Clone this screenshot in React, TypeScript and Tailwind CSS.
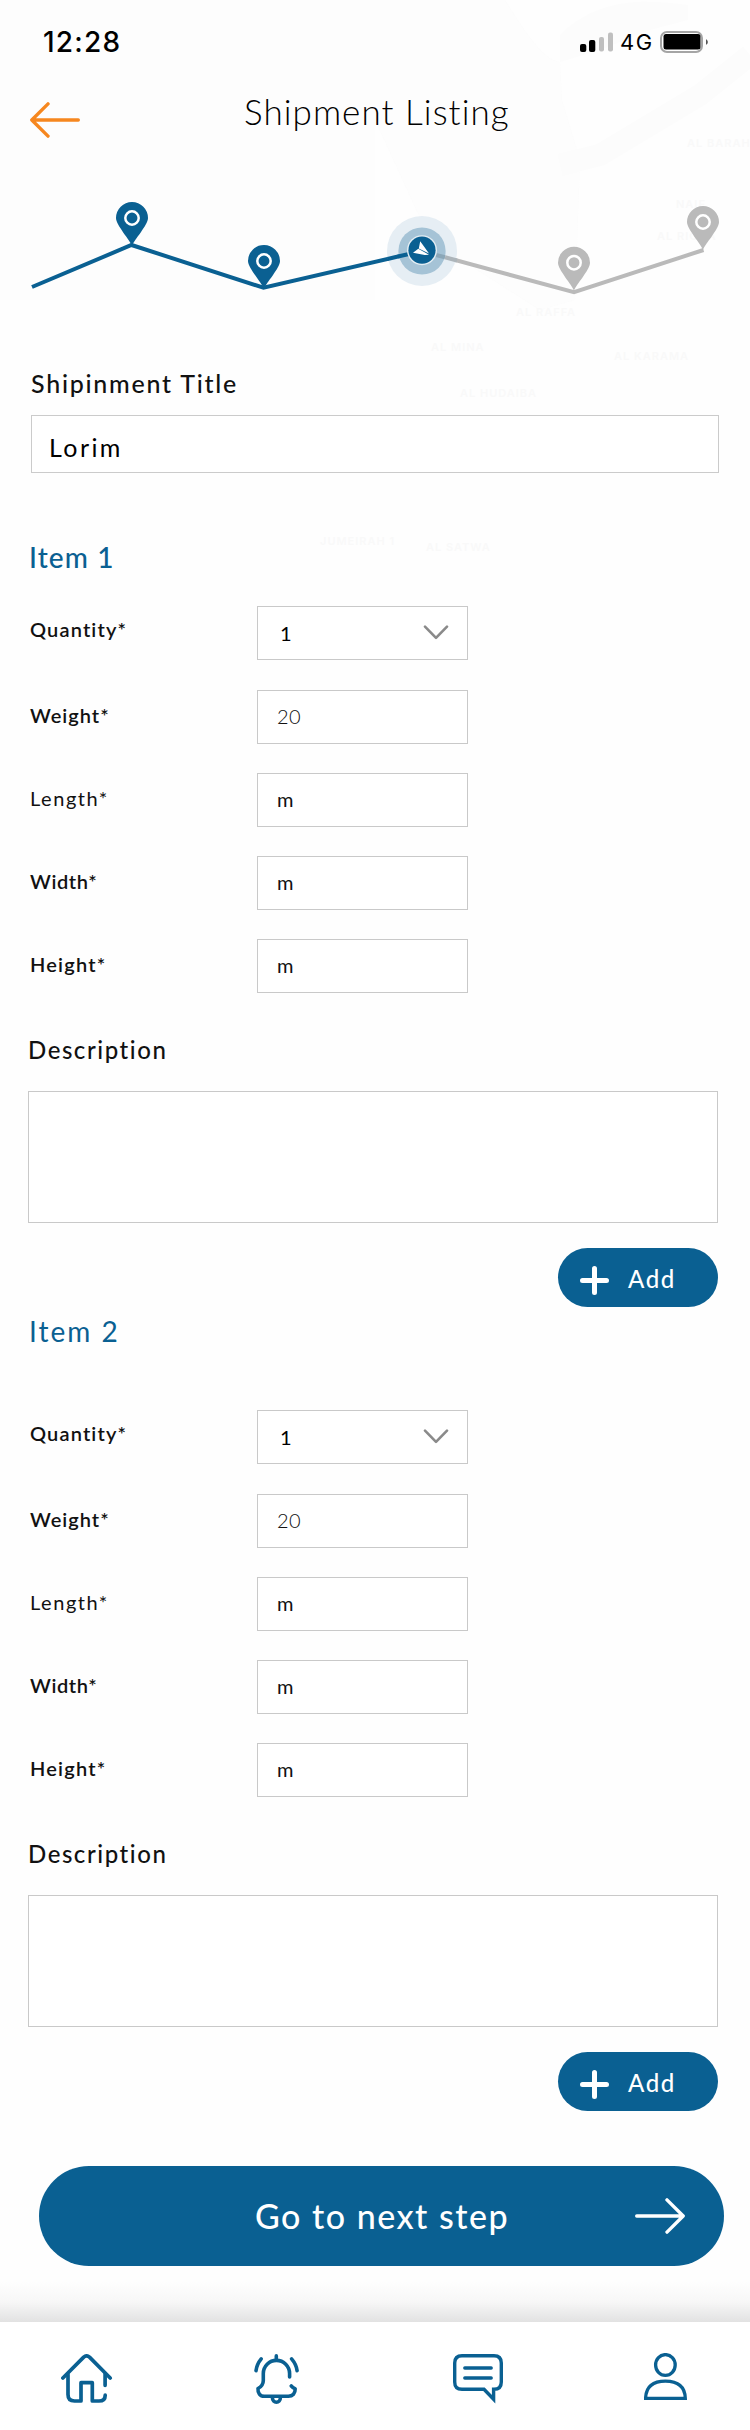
import type { ReactNode } from "react";

const BLUE = "#0a6092";
const GRAY = "#bababa";

function MapBackdrop() {
  return (
    <svg className="absolute inset-0" width="750" height="850" viewBox="0 0 750 850" aria-hidden="true">
      <path d="M505 0C530 40 545 60 560 62L562 100L580 160L575 300L540 310L430 240L375 120V300H0V0Z" fill="#fcfcfc" opacity="0.5" />
      <path d="M560 35C600 -5 650 0 688 5V20L650 30L600 50L560 62Z" fill="#fcfcfc" />
      <path d="M750 55L700 95L600 155L560 165" stroke="#fcfcfc" strokeWidth="22" fill="none" />
      <g fill="#f9f9f9" fontFamily="Inter, sans-serif" fontWeight="600" fontSize="11" letterSpacing="1">
        <text x="687" y="147">AL BARAH</text>
        <text x="676" y="208">NAIF</text>
        <text x="657" y="240">AL RIGGA</text>
        <text x="516" y="316">AL RAFFA</text>
        <text x="431" y="351">AL MINA</text>
        <text x="614" y="360">AL KARAMA</text>
        <text x="460" y="397">AL HUDAIBA</text>
        <text x="320" y="545">JUMEIRAH 1</text>
        <text x="426" y="551">AL SATWA</text>
      </g>
    </svg>
  );
}

function StatusBar() {
  return (
    <div className="flex h-[84px] items-center pr-[41px] pl-[43px] text-black">
      <span className="font-[Inter,sans-serif] text-[28px] font-medium tracking-[1.2px]">12:28</span>
      <div className="ml-auto flex items-center">
        <svg width="34" height="20" viewBox="0 0 34 20">
          <rect x="0" y="12" width="6.3" height="8" rx="2" fill="#000" />
          <rect x="9" y="8" width="6.3" height="12" rx="2" fill="#000" />
          <rect x="19" y="5" width="5" height="14.5" rx="2" fill="#bfbfbf" />
          <rect x="28" y="0.5" width="5" height="19" rx="2" fill="#bfbfbf" />
        </svg>
        <span className="ml-[6px] w-[40px] font-[Inter,sans-serif] text-[22px] tracking-[1.5px]">4G</span>
        <svg width="49" height="22" viewBox="0 0 49 22">
          <rect x="1" y="1" width="41" height="20" rx="6" fill="#fff" stroke="#a5a5a5" strokeWidth="2" />
          <rect x="3.5" y="3" width="37" height="15.5" rx="2.5" fill="#000" />
          <path d="M46 8.2C48.4 9.3 48.4 12.7 46 13.8Z" fill="#555" />
        </svg>
      </div>
    </div>
  );
}

function Header() {
  return (
    <header className="flex h-[53px] items-center pl-[30px]">
      <svg className="mt-[18px]" width="50" height="36" viewBox="0 0 50 36" fill="none" stroke="#f6871f" strokeWidth="3.4" strokeLinecap="round" strokeLinejoin="round">
        <path d="M48.3 18H2M18 1.9L1.8 18L18 34.1" />
      </svg>
      <h1 className="mt-[1px] ml-[164px] text-[35px] font-light tracking-[1.05px] whitespace-nowrap text-black">Shipment Listing</h1>
    </header>
  );
}

function Pin({ x, y, color }: { x: number; y: number; color: string }) {
  return (
    <g transform={`translate(${x} ${y})`}>
      <path d="M0 28C-2 22 -16 7 -16 0A16 16 0 0 1 16 0C16 7 2 22 0 28Z" fill={color} />
      <circle r="6.7" fill="none" stroke="#fff" strokeWidth="2.5" />
    </g>
  );
}

function Stepper() {
  return (
    <svg className="mt-[43px] block" width="750" height="130" viewBox="0 180 750 130">
      <path d="M422 251L574 292.2L703.5 250" fill="none" stroke={GRAY} strokeWidth="4" />
      <path d="M32 287L131.5 245L263.5 287.7L422 251" fill="none" stroke={BLUE} strokeWidth="4" />
      <circle cx="422" cy="251" r="35" fill="#e6eef4" />
      <circle cx="422" cy="251" r="23.6" fill="#a5c3d6" />
      <path d="M387.5 259L399 256.3" stroke={BLUE} strokeWidth="4" />
      <path d="M398 256.5L409 254" stroke={BLUE} strokeWidth="4" />
      <path d="M436 255L445 257.3" stroke="#8ba7b8" strokeWidth="4" />
      <path d="M445 257.3L457 260.5" stroke="#adb5ba" strokeWidth="4" />
      <circle cx="422" cy="250.2" r="15" fill="#e3edf3" />
      <circle cx="422" cy="250.2" r="13.6" fill={BLUE} />
      <path d="M420.2 241.3L418.8 248.4L429 253.4L424 246.4ZM418.3 248.8L413 252.8L424.8 255.1L429 254.7Z" fill="#fff" />
      <Pin x={132} y={218} color={BLUE} />
      <Pin x={264} y={261} color={BLUE} />
      <Pin x={574} y={262.7} color={GRAY} />
      <Pin x={703} y={222} color={GRAY} />
    </svg>
  );
}

function Row({ label, labelClass, children }: { label: string; labelClass: string; children: ReactNode }) {
  return (
    <div className="flex h-[54px] items-center pl-[30px]">
      <div className={`w-[227px] text-[20px] leading-6 whitespace-nowrap text-[#111] ${labelClass}`}>{label}</div>
      {children}
    </div>
  );
}

function ValueBox({ value, className }: { value: string; className: string }) {
  return (
    <div className="flex h-[54px] w-[211px] items-center border border-[#c9c9c9] bg-white pb-[2px] pl-[19px]">
      <span className={`text-[20px] leading-6 text-[#111] ${className}`}>{value}</span>
    </div>
  );
}

function SelectBox({ value }: { value: string }) {
  return (
    <div className="flex h-[54px] w-[211px] items-center justify-between border border-[#c9c9c9] bg-white pr-[18px] pb-[1px] pl-[22px]">
      <span className="text-[20px] leading-6 text-black">{value}</span>
      <svg width="26" height="15" viewBox="0 0 26 15" fill="none" stroke="#8a8a8a" strokeWidth="2.6" strokeLinecap="round" strokeLinejoin="round">
        <path d="M2 1.6L13 12.9L24 1.6" />
      </svg>
    </div>
  );
}

function ItemFields() {
  return (
    <div>
      <Row label="Quantity*" labelClass="pb-[9px] font-semibold tracking-[1.15px]">
        <SelectBox value="1" />
      </Row>
      <div className="mt-[30px] flex flex-col gap-[29px]">
        <Row label="Weight*" labelClass="pb-[4px] font-semibold tracking-[1px]">
          <ValueBox value="20" className="font-light tracking-[0.4px]" />
        </Row>
        <Row label="Length*" labelClass="pb-[4px] tracking-[1.55px]">
          <ValueBox value="m" className="" />
        </Row>
        <Row label="Width*" labelClass="pb-[4px] font-semibold tracking-[0.6px]">
          <ValueBox value="m" className="" />
        </Row>
        <Row label="Height*" labelClass="pb-[4px] font-semibold tracking-[1.2px]">
          <ValueBox value="m" className="" />
        </Row>
      </div>
      <div className="pl-[28px]">
        <div className="mt-[43px] text-[24px] leading-7 font-medium tracking-[1.55px] text-[#111]">Description</div>
        <div className="mt-[27px] h-[132px] w-[690px] border border-[#c9c9c9] bg-white" />
      </div>
      <div className="mt-[25px] flex justify-end pr-8">
        <button className="flex h-[59px] w-[160px] items-center rounded-full bg-[#0a6092] pl-[22px] text-white">
          <svg className="mt-[5px]" width="29" height="29" viewBox="0 0 29 29" stroke="#fff" strokeWidth="5" strokeLinecap="round">
            <path d="M2.5 14.5H26.5M14.5 2.5V26.5" />
          </svg>
          <span className="mt-[3px] ml-[19px] text-[24px] leading-7 font-medium tracking-[1.6px]">Add</span>
        </button>
      </div>
    </div>
  );
}

function BottomNav() {
  return (
    <nav className="flex h-[108px] items-start bg-white pt-8 pl-[61px]">
      <svg width="52" height="52" viewBox="0 0 52 52" fill="none" stroke={BLUE} strokeWidth="3.7" strokeLinecap="round" strokeLinejoin="round">
        <path d="M1.9 24L22.7 3.1Q25.6 0.7 28.5 3.1L49.2 24" />
        <path d="M7 20.5V40.5Q7 47 13.5 47H20V28.7H31.3V47H38Q44.2 47 44.2 41.2M44.1 20V31.3" />
      </svg>
      <svg className="ml-[141px]" width="46" height="52" viewBox="0 0 46 52" fill="none" stroke={BLUE} strokeWidth="3.6" strokeLinecap="round" strokeLinejoin="round">
        <path d="M22.3 1.9V6" />
        <path d="M35.6 23V19.5A13.15 13.15 0 0 0 9.3 19.5V26.5C9.3 30.5 7.5 32.6 4 34.5C3.6 39 6 42.3 10.3 42.3H34.3C38.8 42.3 41.3 39.3 41.2 34.9C39.7 34.1 38 33 37.2 31.9" />
        <path d="M18.4 43.5C18.4 49.9 26.4 49.9 26.4 43.5" />
        <path d="M2 16.7C2.6 12 4.4 8.3 7.2 4.9M43.1 16.7C42.5 12 40.5 8.3 37.6 4.9" />
      </svg>
      <svg className="mt-[-1px] ml-[153px]" width="50" height="52" viewBox="0 0 50 52" fill="none" stroke={BLUE} strokeWidth="3.4" strokeLinecap="round" strokeLinejoin="miter">
        <path d="M9 2.7H41Q48.3 2.7 48.3 10V29Q48.3 36.3 41 36.3H40.6V46.3L31 36.3H9Q1.7 36.3 1.7 29V10Q1.7 2.7 9 2.7Z" />
        <path d="M11.8 15H38.2M11.8 25H38.2" />
      </svg>
      <svg className="mt-[-1px] ml-[141px]" width="44" height="52" viewBox="0 0 44 52" fill="none" stroke={BLUE} strokeWidth="3.3">
        <ellipse cx="21.4" cy="12" rx="9.8" ry="10.4" />
        <path d="M1.6 45.3C2 33 10 28.2 21.4 28.2S40.9 33 41.3 45.3Z" />
      </svg>
    </nav>
  );
}

export default function App() {
  return (
    <div className="relative w-[750px] overflow-hidden bg-[#fefefe] font-[Lato,sans-serif]">
      <MapBackdrop />
      <div className="relative flex flex-col">
        <StatusBar />
        <Header />
        <Stepper />
        <div className="mt-[58px] pl-[31px] text-[25px] leading-[30px] font-medium tracking-[1.75px] text-[#111]">Shipinment Title</div>
        <div className="mt-[17px] ml-[31px] flex h-[58px] w-[688px] items-center border border-[#cbcbcb] bg-white pt-[5px] pl-[17px]">
          <span className="text-[25px] leading-[30px] tracking-[2.4px] text-black">Lorim</span>
        </div>
        <h2 className="mt-[67px] pl-[29px] text-[28px] leading-[34px] font-medium tracking-[1.1px] text-[#0a6092]">Item 1</h2>
        <div className="mt-8">
          <ItemFields />
        </div>
        <h2 className="mt-[7px] pl-[29px] text-[28px] leading-[34px] tracking-[2px] text-[#0a6092]">Item 2</h2>
        <div className="mt-[62px]">
          <ItemFields />
        </div>
        <button className="mt-[55px] ml-[39px] flex h-[100px] w-[685px] items-center rounded-full bg-[#0a6092] pl-[216px] text-white">
          <span className="text-[34px] leading-10 font-medium tracking-[1.5px] whitespace-nowrap">Go to next step</span>
          <svg className="mr-[39px] ml-auto" width="50" height="36" viewBox="0 0 50 36" fill="none" stroke="#fff" strokeWidth="3.4" strokeLinecap="round" strokeLinejoin="round">
            <path d="M1.7 18H48M32 1.9L48.2 18L32 34.1" />
          </svg>
        </button>
        <div className="mt-4 h-10 bg-linear-to-b from-[#fefefe] via-[#f7f7f7] to-[#e2e2e2]" />
        <BottomNav />
      </div>
    </div>
  );
}
